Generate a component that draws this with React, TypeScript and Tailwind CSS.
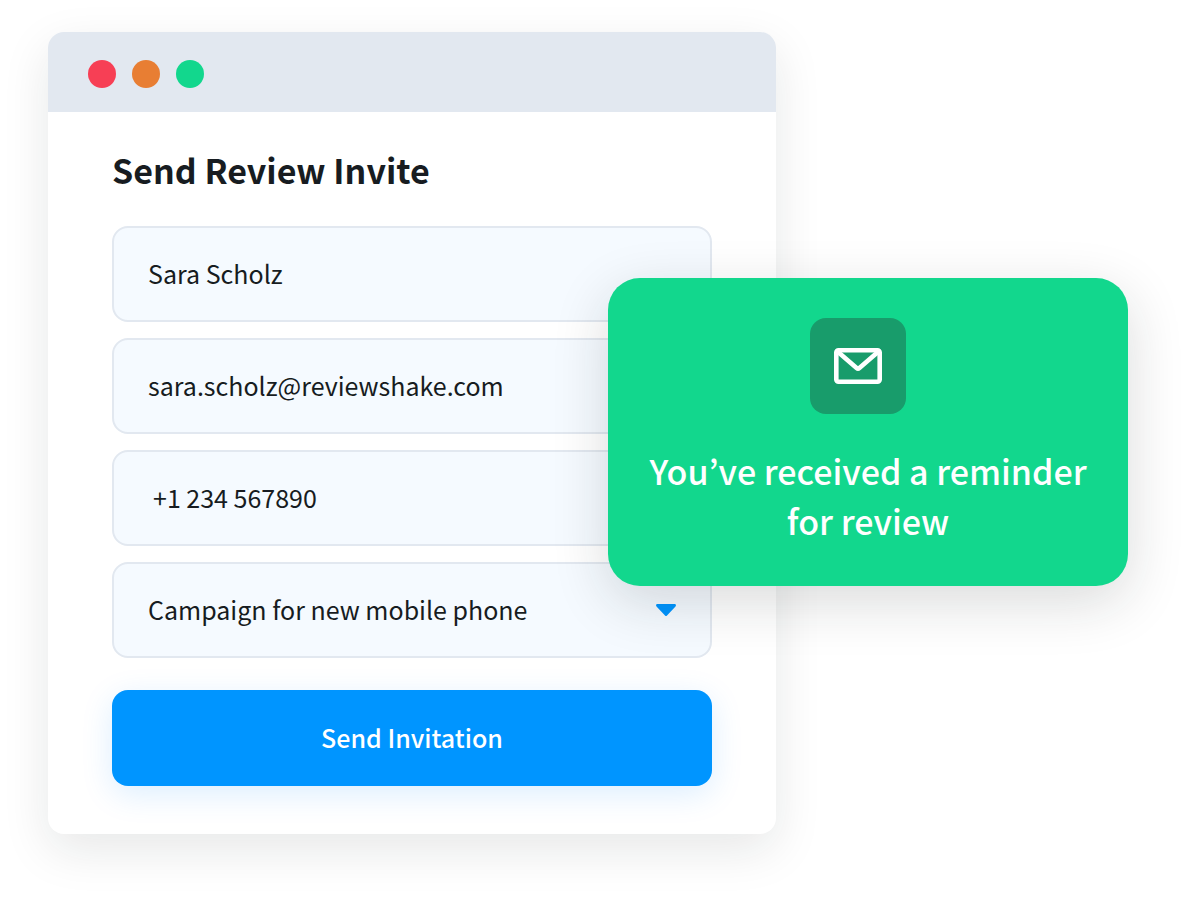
import { useState } from "react";

const fieldClass =
  "block h-24 w-full rounded-2xl border-2 border-[#e2e8f0] bg-[#f5faff] pr-9 text-[25px] text-[#171c21] outline-none focus:border-[#0095ff]";

function WindowBar() {
  return (
    <div className="flex h-20 items-center gap-4 bg-[#e2e8f0] px-10 pt-1">
      <span className="size-7 rounded-full bg-[#f73f55]" />
      <span className="size-7 rounded-full bg-[#e87e33]" />
      <span className="size-7 rounded-full bg-[#12d78d]" />
    </div>
  );
}

function InviteForm() {
  const [name, setName] = useState("Sara Scholz");
  const [email, setEmail] = useState("sara.scholz@reviewshake.com");
  const [phone, setPhone] = useState("+1 234 567890");

  return (
    <form
      className="px-16 pt-8 pb-12"
      onSubmit={(event) => event.preventDefault()}
    >
      <h1 className="text-[34px] leading-[52px] font-bold text-[#171c21]">
        Send Review Invite
      </h1>
      <div className="mt-[30px] flex flex-col gap-4">
        <input
          aria-label="Name"
          type="text"
          className={`${fieldClass} pb-0.5 pl-[34px]`}
          value={name}
          onChange={(event) => setName(event.target.value)}
        />
        <input
          aria-label="Email"
          type="email"
          className={`${fieldClass} pb-0.5 pl-[34px]`}
          value={email}
          onChange={(event) => setEmail(event.target.value)}
        />
        <input
          aria-label="Phone"
          type="tel"
          className={`${fieldClass} pb-0.5 pl-[39px]`}
          value={phone}
          onChange={(event) => setPhone(event.target.value)}
        />
        <div className="relative">
          <select
            aria-label="Campaign"
            className={`${fieldClass} appearance-none pl-[34px]`}
          >
            <option>Campaign for new mobile phone</option>
          </select>
          <svg
            aria-hidden="true"
            viewBox="0 0 20 12"
            className="pointer-events-none absolute top-[42px] right-9 h-3 w-5 fill-[#0095ff]"
          >
            <path d="M1.4 0H18.6C19.9 0 20.4 1.5 19.5 2.4L11 11.4C10.4 12.1 9.6 12.1 9 11.4L.5 2.4C-.4 1.5.1 0 1.4 0Z" />
          </svg>
        </div>
      </div>
      <button
        type="submit"
        className="mt-8 block h-24 w-full cursor-pointer rounded-2xl bg-[#0095ff] text-[25px] font-medium text-white shadow-[0_8px_32px_rgba(0,132,255,0.14)]"
      >
        Send Invitation
      </button>
    </form>
  );
}

function ReminderCard() {
  return (
    <aside className="absolute top-[246px] right-0 flex w-[520px] max-w-full flex-col items-center rounded-[32px] bg-[#12d78d] px-8 pt-10 pb-10 shadow-[0_16px_56px_rgba(23,28,33,0.16)]">
      <div className="mr-5 flex size-24 items-center justify-center rounded-2xl bg-[#189c6b]">
        <svg
          aria-hidden="true"
          viewBox="0 0 48 36"
          className="h-9 w-12 fill-none stroke-white stroke-[4.6]"
          strokeLinecap="round"
          strokeLinejoin="round"
        >
          <rect x="2.3" y="2.3" width="43.4" height="31.4" rx="2.2" />
          <path d="M3.5 3.5L22.6 20Q24 21.2 25.4 20L44.5 3.5" />
        </svg>
      </div>
      <p className="mt-8 text-center text-[34px] leading-[50px] font-medium text-white">
        You’ve received a reminder for review
      </p>
    </aside>
  );
}

export default function App() {
  return (
    <main className="min-h-screen overflow-hidden bg-white px-12 pt-8 pb-16 font-['Noto_Sans_CJK_KR',sans-serif]">
      <div className="relative max-w-[1080px]">
        <section className="max-w-[728px] overflow-hidden rounded-2xl bg-white shadow-[0_16px_48px_rgba(23,28,33,0.1)]">
          <WindowBar />
          <InviteForm />
        </section>
        <ReminderCard />
      </div>
    </main>
  );
}
